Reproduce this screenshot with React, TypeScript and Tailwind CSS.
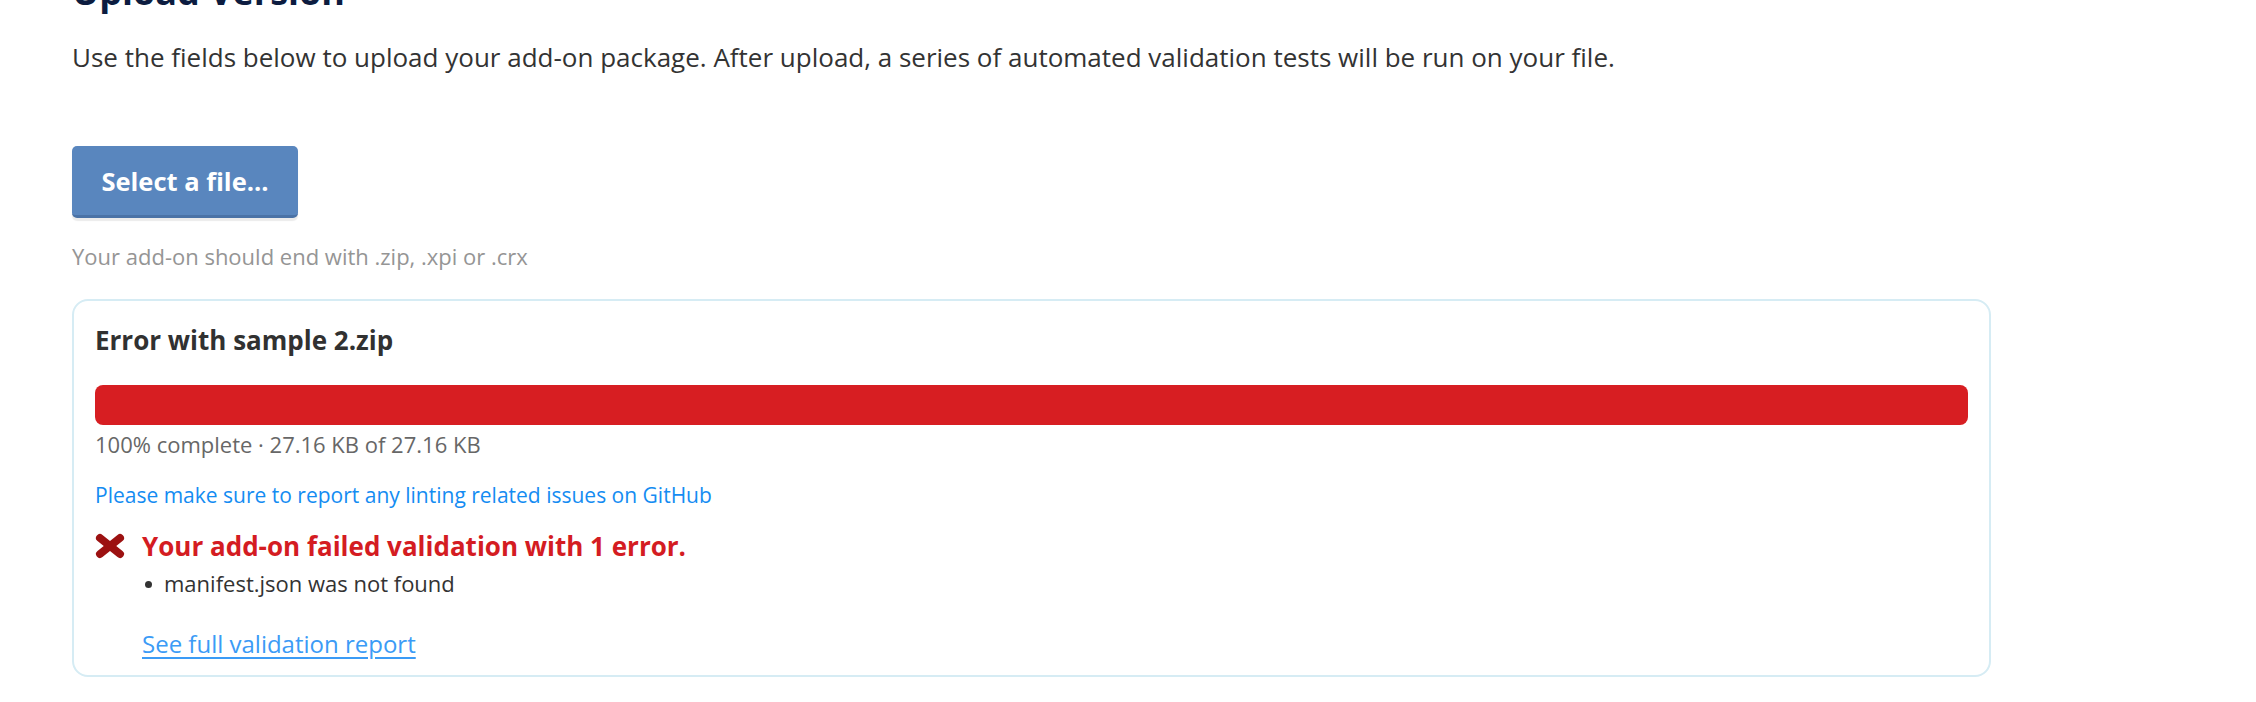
import React from "react";

function ErrorX() {
  return (
    <svg width="30" height="26" viewBox="0 0 30 26" className="shrink-0">
      <g stroke="#9c1111" strokeWidth="8" strokeLinecap="round">
        <line x1="5" y1="5" x2="25" y2="21" />
        <line x1="25" y1="5" x2="5" y2="21" />
      </g>
    </svg>
  );
}

export default function App() {
  return (
    <div className="flex flex-col w-full min-h-screen bg-white pl-[72px] font-['Open_Sans',sans-serif] overflow-hidden">
      <h2 className="-mt-[28px] text-[36px] leading-[40px] font-bold text-[#0c1c40]">
        Upload Version
      </h2>
      <p className="mt-[28px] text-[26px] leading-[34px] text-[#333333]">
        Use the fields below to upload your add-on package. After upload, a series of automated validation tests will be run on your file.
      </p>
      <div className="mt-[72px]">
        <button className="h-[72px] w-[226px] rounded-[5px] bg-[#5986be] border-b-[3px] border-[#4a72a6] shadow-[0_3px_1px_rgba(0,0,0,0.08)] text-white font-bold text-[25.5px] leading-[30px]">
          Select a file...
        </button>
      </div>
      <p className="mt-[23px] text-[22px] leading-[30px] text-[#959595]">
        Your add-on should end with .zip, .xpi or .crx
      </p>
      <div className="mt-[28px] w-[1919px] rounded-[16px] border-2 border-[#d6ecf4] px-[21px] pt-[23px] pb-[16px] flex flex-col">
        <h3 className="text-[26px] leading-[32px] font-bold text-[#313131]">Error with sample 2.zip</h3>
        <div className="mt-[29px] h-[40px] w-full rounded-[8px] bg-[#d71e22]" />
        <div className="mt-[5px] text-[22px] leading-[28px] text-[#676767]">
          100% complete · 27.16 KB of 27.16 KB
        </div>
        <a href="#" className="mt-[23px] text-[21px] leading-[28px] text-[#148cf2] w-fit">
          Please make sure to report any linting related issues on GitHub
        </a>
        <div className="mt-[20px] flex items-center gap-[17px]">
          <ErrorX />
          <span className="text-[26px] leading-[34px] font-bold text-[#d41c22]">
            Your add-on failed validation with 1 error.
          </span>
        </div>
        <ul className="mt-[5px] pl-[50px]">
          <li className="flex items-center text-[22px] leading-[30px] text-[#333333]">
            <span className="w-[7px] h-[7px] rounded-full bg-[#333333] mr-[12px] mt-[2px]" />
            <span>manifest.json was not found</span>
          </li>
        </ul>
        <a href="#" className="mt-[31px] ml-[47px] w-fit text-[24px] leading-[30px] text-[#3b9bf6] underline underline-offset-[4px]">
          See full validation report
        </a>
      </div>
    </div>
  );
}
